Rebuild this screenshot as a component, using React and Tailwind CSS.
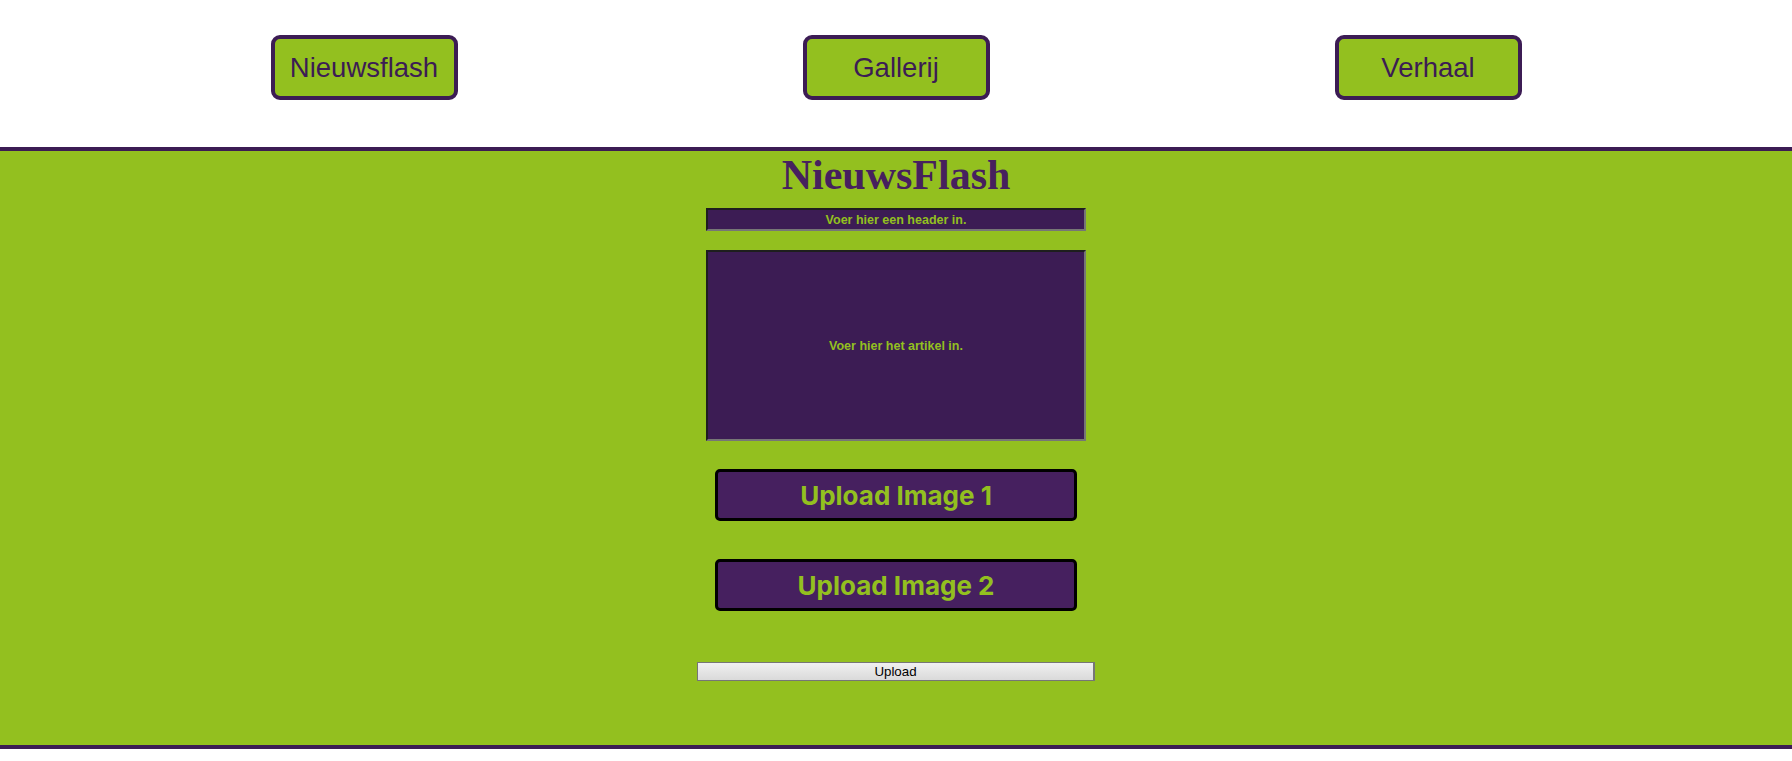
import React from 'react';

const navItems = ['Nieuwsflash', 'Gallerij', 'Verhaal'];

const App = () => {
  return (
    <div className="min-h-screen bg-white">
      {/* Top navigation */}
      <nav className="flex justify-center gap-[345px] pt-[35px] h-[147px]">
        {navItems.map((item) => (
          <button
            key={item}
            className="w-[187px] h-[65px] border-4 border-[#3c1c54] rounded-[9px] bg-[#93c01f] text-[#3c1c54] text-[27.5px] font-['Liberation_Sans',Arial,sans-serif]"
          >
            {item}
          </button>
        ))}
      </nav>

      {/* Form section */}
      <section className="h-[602px] border-y-4 border-[#3c1c54] bg-[#93c01f] flex flex-col items-center">
        <h1 className="mt-[2px] text-[42px] leading-[45px] font-bold text-[#46205e] font-['Liberation_Serif','Times_New_Roman',serif]">
          NieuwsFlash
        </h1>

        <input
          type="text"
          placeholder="Voer hier een header in."
          className="mt-[10px] w-[380px] h-[23px] border-2 border-t-[#1e1e1e] border-l-[#1e1e1e] border-b-[#767676] border-r-[#767676] bg-[#3c1c54] text-center text-[12.5px] font-bold text-[#93c01f] placeholder:text-[#93c01f] font-['Liberation_Sans',Arial,sans-serif] outline-none"
        />

        <textarea
          placeholder="Voer hier het artikel in."
          className="mt-[19px] w-[380px] h-[191px] pt-[85px] resize-none border-2 border-t-[#1e1e1e] border-l-[#1e1e1e] border-b-[#767676] border-r-[#767676] bg-[#3c1c54] text-center text-[12.5px] font-bold text-[#93c01f] placeholder:text-[#93c01f] font-['Liberation_Sans',Arial,sans-serif] outline-none"
        />

        <button className="mt-[28px] w-[362px] h-[52px] border-[3px] border-black rounded-[5px] bg-[#46205f] text-[#93c01f] text-[26px] font-bold font-['Inter',sans-serif]">
          Upload Image 1
        </button>

        <button className="mt-[38px] w-[362px] h-[52px] border-[3px] border-black rounded-[5px] bg-[#46205f] text-[#93c01f] text-[26px] font-bold font-['Inter',sans-serif]">
          Upload Image 2
        </button>

        <button className="mt-[51px] w-[398px] h-[19px] border border-[#767676] border-r-2 bg-gradient-to-b from-[#f0f0f0] to-[#dadada] text-black text-[13.33px] leading-none font-['Liberation_Sans',Arial,sans-serif]">
          Upload
        </button>
      </section>
    </div>
  );
};

export default App;
